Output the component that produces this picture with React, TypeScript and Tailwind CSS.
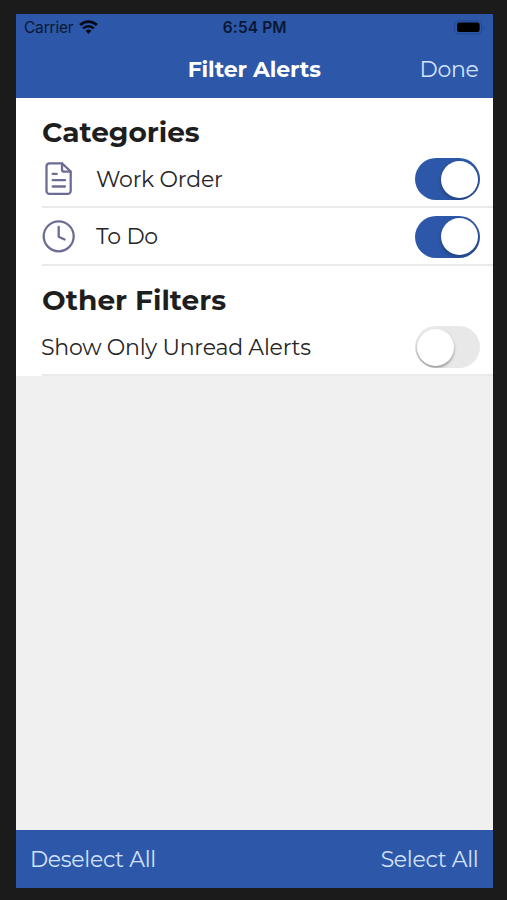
import { useState } from 'react'
import type { ReactNode } from 'react'
import { clsx } from 'clsx'

type ToggleProps = {
  readonly label: string
  readonly checked: boolean
  readonly onChange: (checked: boolean) => void
}

function Toggle({ label, checked, onChange }: ToggleProps) {
  return (
    <button
      type="button"
      role="switch"
      aria-label={label}
      aria-checked={checked}
      onClick={() => onChange(!checked)}
      className={clsx(
        'flex h-[42px] w-[65px] shrink-0 items-center overflow-hidden rounded-full px-[2px]',
        checked ? 'justify-end bg-[#2d58a9]' : 'justify-start bg-[#e8e8e8]',
      )}
    >
      <span
        className={clsx(
          'size-[37px] rounded-full bg-white',
          checked
            ? 'shadow-[0_2px_4px_rgba(0,0,0,0.3)]'
            : 'shadow-[0_2px_3px_rgba(0,0,0,0.35)]',
        )}
      />
    </button>
  )
}

function WifiIcon() {
  return (
    <svg width="19" height="14.5" viewBox="0 0 20 15" fill="none">
      <path d="M1.2 5.200a12.6 12.6 0 0 1 17.6 0" stroke="#050a18" strokeWidth="3" />
      <path d="M4.300 8.700a8.2 8.2 0 0 1 11.4 0" stroke="#050a18" strokeWidth="2.7" />
      <path d="M10 14.6 6.900 11.300a4.5 4.5 0 0 1 6.2 0Z" fill="#050a18" />
    </svg>
  )
}

function BatteryIcon() {
  return (
    <svg width="31" height="15" viewBox="0 0 31 15" fill="none">
      <rect x="0.7" y="0.7" width="27" height="13.2" rx="4" stroke="#234a90" strokeWidth="1.1" />
      <rect x="3" y="2.5" width="22.6" height="9.6" rx="2" fill="#000" />
      <path d="M29.2 5.2c1.2.7 1.2 3.500 0 4.2Z" fill="#234a90" />
    </svg>
  )
}

function DocumentIcon() {
  return (
    <svg
      width="34"
      height="34"
      viewBox="0 0 34 34"
      fill="none"
      stroke="#6c6d94"
      strokeWidth="2.3"
      strokeLinecap="round"
      strokeLinejoin="round"
    >
      <path d="M20 1.300H7.500a3 3 0 0 0-3 3v24.600a3 3 0 0 0 3 3h18.200a3 3 0 0 0 3-3V9.500Z" />
      <path d="M20 1.500v6A2.200 2.200 0 0 0 22.200 9.700H28.500" />
      <path d="M10.700 11.900h4M10.700 18.200h12.300M10.700 24.500h12.300" />
    </svg>
  )
}

function ClockIcon() {
  return (
    <svg
      width="34"
      height="34"
      viewBox="0 0 34 34"
      fill="none"
      stroke="#6c6d94"
      strokeWidth="2.3"
      strokeLinecap="round"
      strokeLinejoin="round"
    >
      <circle cx="16.7" cy="16.3" r="15" />
      <path d="M16.700 6.800V16.700l5.900 2.800" />
    </svg>
  )
}

type FilterRowProps = ToggleProps & {
  readonly icon?: ReactNode
  readonly labelClass: string
}

function FilterRow({ icon, labelClass, ...toggle }: FilterRowProps) {
  return (
    <div className="ml-[26px] flex h-[57.5px] items-center border-b-2 border-[#e9e9e9] pt-[2px] pr-[13px]">
      {icon && <span className="mr-[20px] shrink-0">{icon}</span>}
      <span className={clsx('flex-1 whitespace-nowrap text-[22px] text-[#262626]', labelClass)}>
        {toggle.label}
      </span>
      <Toggle {...toggle} />
    </div>
  )
}

export default function App() {
  const [workOrder, setWorkOrder] = useState(true)
  const [toDo, setToDo] = useState(true)
  const [unreadOnly, setUnreadOnly] = useState(false)

  const setAll = (value: boolean) => {
    setWorkOrder(value)
    setToDo(value)
  }

  return (
    <div className="h-[900px] w-[507px] bg-[#1b1b1b] pt-[14px] pl-4 font-['Montserrat','Inter',sans-serif]">
      <div className="flex h-[874px] w-[476.5px] flex-col bg-[#f0f0f0]">
        <header className="h-[83.5px] bg-[#2d58a9]">
          <div className="grid h-[27px] grid-cols-3 items-center pr-[7px] pl-[8px] font-['Inter',sans-serif] text-[15.5px] text-[#0a1733]">
            <span className="flex items-center gap-[6px]">
              <span className="tracking-[-0.2px]">Carrier</span>
              <WifiIcon />
            </span>
            <span className="text-center font-semibold tracking-[0.1px]">6:54 PM</span>
            <span className="flex justify-end">
              <BatteryIcon />
            </span>
          </div>
          <div className="grid h-[56px] grid-cols-[1fr_auto_1fr] items-center px-[14px]">
            <h1 className="col-start-2 text-[22px] font-bold tracking-[-0.1px] text-white">
              Filter Alerts
            </h1>
            <button
              type="button"
              className="justify-self-end text-[22px] tracking-[-0.3px] text-[#d3e2ff]"
            >
              Done
            </button>
          </div>
        </header>

        <main className="h-[278.5px] bg-white">
          <h2 className="ml-[26px] flex h-[53px] items-end pb-px text-[28px] leading-[36px] font-bold text-[#1e1e1e]">
            Categories
          </h2>
          <FilterRow
            icon={<DocumentIcon />}
            label="Work Order"
            labelClass="tracking-[-0.2px]"
            checked={workOrder}
            onChange={setWorkOrder}
          />
          <FilterRow
            icon={<ClockIcon />}
            label="To Do"
            labelClass="tracking-[-0.2px]"
            checked={toDo}
            onChange={setToDo}
          />
          <h2 className="ml-[26px] flex h-[53px] items-end pb-px text-[28px] leading-[36px] font-bold text-[#1e1e1e]">
            Other Filters
          </h2>
          <FilterRow
            label="Show Only Unread Alerts"
            labelClass="-ml-px tracking-[-0.23px]"
            checked={unreadOnly}
            onChange={setUnreadOnly}
          />
        </main>

        <footer className="mt-auto flex h-[58px] items-center justify-between bg-[#2d58a9] px-[14px] text-[22px] tracking-[-0.3px] text-[#d3e2ff]">
          <button type="button" onClick={() => setAll(false)}>
            Deselect All
          </button>
          <button type="button" onClick={() => setAll(true)}>
            Select All
          </button>
        </footer>
      </div>
    </div>
  )
}
